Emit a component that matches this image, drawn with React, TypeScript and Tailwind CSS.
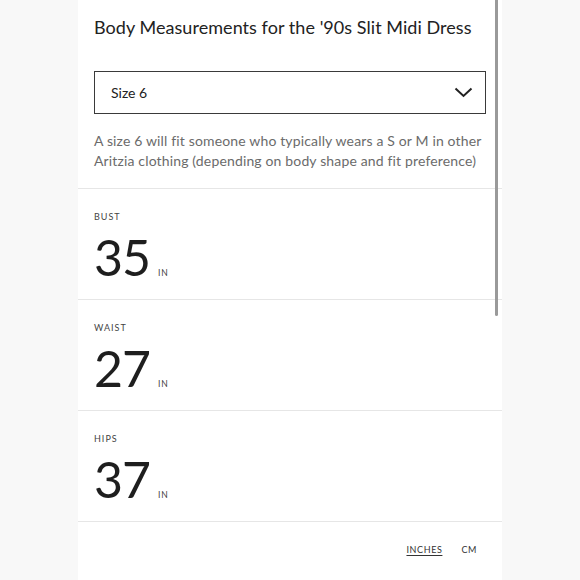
import React from 'react';

const rows = [
  { label: 'BUST', value: 35 },
  { label: 'WAIST', value: 27 },
  { label: 'HIPS', value: 37 },
];

export default function App() {
  return (
    <div className="w-[580px] h-[580px] bg-[#f8f8f8] overflow-hidden font-['Lato',sans-serif]">
      <div className="relative ml-[78px] w-[424px] h-full bg-white">
        {/* Scrollbar */}
        <div className="absolute right-[4px] top-0 w-[3px] h-[316px] bg-[#9a9a9a] rounded-b-sm" />

        {/* Header */}
        <div className="px-4 pt-[15px] h-[188px]">
          <h1 className="text-[18px] leading-[24px] text-[#222] tracking-[0.05px]">
            Body Measurements for the '90s Slit Midi Dress
          </h1>
          <div className="mt-[32px] w-[392px] h-[43px] border border-[#3a3a3a] flex items-center justify-between pl-4 pr-[12px]">
            <span className="text-[14px] text-[#222]">Size 6</span>
            <svg width="19" height="11" viewBox="0 0 19 11" fill="none">
              <path d="M1.5 1.5 L9.5 9 L17.5 1.5" stroke="#222" strokeWidth="2" />
            </svg>
          </div>
          <p className="mt-[17px] text-[14px] leading-[20px] tracking-[0.15px] text-[#6b6b6b]">
            A size 6 will fit someone who typically wears a S or M in other Aritzia clothing (depending on body shape and fit preference)
          </p>
        </div>

        {/* Measurements */}
        {rows.map((r) => (
          <div key={r.label} className="h-[111px] border-t border-[#e6e6e6] px-4 pt-[22px]">
            <div className="text-[9px] leading-[12px] tracking-[1px] text-[#444]">{r.label}</div>
            <div className="flex items-baseline mt-[8px]">
              <span className="text-[50px] leading-[52px] tracking-[-1px] text-[#1e1e1e]">{r.value}</span>
              <span className="ml-[8px] text-[8.5px] tracking-[0.8px] text-[#444]">IN</span>
            </div>
          </div>
        ))}

        {/* Units */}
        <div className="border-t border-[#e6e6e6] flex justify-end gap-[19px] pr-[25px] pt-[21px]">
          <span className="text-[9px] tracking-[0.6px] text-[#333] underline underline-offset-2">INCHES</span>
          <span className="text-[9px] tracking-[0.6px] text-[#333]">CM</span>
        </div>
      </div>
    </div>
  );
}
